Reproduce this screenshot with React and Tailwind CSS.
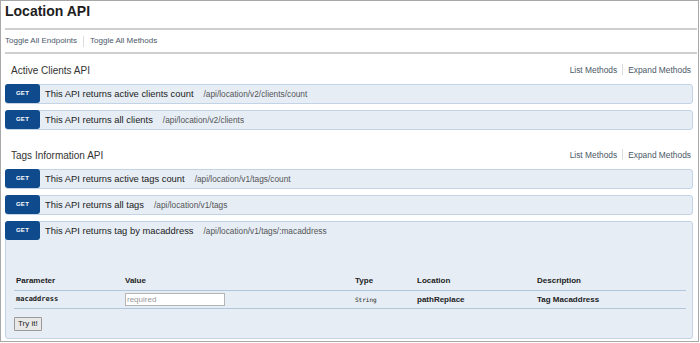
import React from 'react';

const sections = [
  {
    title: 'Active Clients API',
    endpoints: [
      { summary: 'This API returns active clients count', path: '/api/location/v2/clients/count' },
      { summary: 'This API returns all clients', path: '/api/location/v2/clients' },
    ],
  },
  {
    title: 'Tags Information API',
    endpoints: [
      { summary: 'This API returns active tags count', path: '/api/location/v1/tags/count' },
      { summary: 'This API returns all tags', path: '/api/location/v1/tags' },
      { summary: 'This API returns tag by macaddress', path: '/api/location/v1/tags/:macaddress', open: true },
    ],
  },
];

function EndpointHeader({ summary, path }) {
  return (
    <div className="flex items-center h-[18px]">
      <span className="w-[35px] h-[19px] -ml-px -mt-px rounded-[3px] bg-[#0f4b8c] text-white text-[6px] font-bold flex items-center justify-center tracking-[0.3px]">
        GET
      </span>
      <span className="ml-[5px] text-[9.4px] text-[#222]">{summary}</span>
      <span className="ml-[10px] text-[8.3px] text-[#555]">{path}</span>
    </div>
  );
}

function Endpoint({ summary, path, open }) {
  if (!open) {
    return (
      <div className="h-[20px] mb-[6px] rounded-[3px] border border-[#c3d3e6] bg-[#e6edf5]">
        <EndpointHeader summary={summary} path={path} />
      </div>
    );
  }
  return (
    <div className="rounded-[3px] border border-[#c3d3e6] bg-[#e6edf5] h-[118px]">
      <EndpointHeader summary={summary} path={path} />
      <div className="mt-[32px] ml-[8px] mr-[6px]">
        <div className="flex items-center h-[19px] border-b border-[#afc6dd] text-[8px] font-bold text-[#222] px-[2px]">
          <span className="w-[109px]">Parameter</span>
          <span className="w-[230px]">Value</span>
          <span className="w-[62px]">Type</span>
          <span className="w-[120px]">Location</span>
          <span>Description</span>
        </div>
        <div className="flex items-center h-[18px] border-b border-[#afc6dd] text-[8px] font-bold text-[#222] px-[2px]">
          <span className="w-[109px] font-['DejaVu_Sans_Mono',monospace] text-[7px]">macaddress</span>
          <span className="w-[230px]">
            <span className="block w-[100px] h-[13px] bg-white border border-[#b5b5b5] text-[8px] font-normal text-[#999] leading-[11px] pl-[1px]">
              required
            </span>
          </span>
          <span className="w-[62px] font-['DejaVu_Sans_Mono',monospace] text-[6px] font-normal">String</span>
          <span className="w-[120px]">pathReplace</span>
          <span>Tag Macaddress</span>
        </div>
        <button className="mt-[7px] h-[14px] px-[3px] border border-[#9a9a9a] bg-[#e8e8e8] text-[8px] text-[#222] leading-none rounded-[1px]">
          Try it!
        </button>
      </div>
    </div>
  );
}

export default function App() {
  return (
    <div className="w-[699px] h-[342px] border border-[#a8a8a8] bg-white overflow-hidden font-['Liberation_Sans',Arial,sans-serif]">
      <div className="pl-[4px] pr-[1px]">
        <h1 className="h-[27px] text-[14px] font-bold text-[#1d1d1d] leading-[18px] pt-[1px]">Location API</h1>
        <div className="border-t-2 border-[#cfcfcf] h-[24px] flex items-center text-[8px] text-[#4b5868]">
          <span>Toggle All Endpoints</span>
          <span className="mx-[6px] w-px h-[11px] bg-[#ddd]" />
          <span>Toggle All Methods</span>
        </div>
        <div className="border-t-2 border-[#cfcfcf] pr-[4px]">
          {sections.map((s, i) => (
            <div key={s.title} className={i === 0 ? 'pt-[7px]' : 'pt-[10px]'}>
              <div className="h-[18px] mb-[5px] flex items-center justify-between pl-[6px]">
                <span className="text-[10px] text-[#333]">{s.title}</span>
                <span className="flex items-center text-[8.4px] text-[#4b5868] pr-[2px]">
                  <span>List Methods</span>
                  <span className="mx-[5px] w-px h-[11px] bg-[#ddd]" />
                  <span>Expand Methods</span>
                </span>
              </div>
              {s.endpoints.map((e) => (
                <Endpoint key={e.path} {...e} />
              ))}
            </div>
          ))}
        </div>
      </div>
    </div>
  );
}
